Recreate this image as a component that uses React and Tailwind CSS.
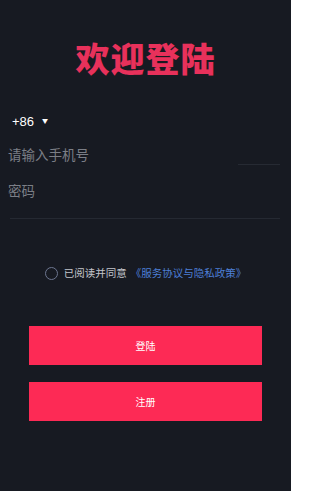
export default function App() {
  const font = { fontFamily: '"Noto Sans CJK SC", "Noto Sans", sans-serif' };
  return (
    <div
      className="w-[291px] h-[491px] bg-[#171a22] flex flex-col overflow-hidden"
      style={font}
    >
      <div className="pt-[36px] flex justify-center">
        <h1 className="text-[34px] leading-[44px] font-black text-[#e8315b] tracking-[1px]">
          欢迎登陆
        </h1>
      </div>

      <div className="mt-[31px] pl-[12px] flex items-center h-[20px]">
        <span className="text-[13px] text-white leading-none" style={{ fontFamily: '"Liberation Sans", sans-serif' }}>+86</span>
        <span className="ml-[8px] text-[6px] text-white leading-none">▼</span>
      </div>

      <div className="mt-[10px] flex items-end h-[20px] pl-[8px] pr-[11px]">
        <span className="text-[13.5px] text-[#7b7e86] leading-none flex-1">请输入手机号</span>
        <div className="w-[42px] h-px bg-[#262a33] mb-[-4px]"></div>
      </div>

      <div className="mt-[20px] pl-[8px] h-[20px] flex items-center">
        <span className="text-[13.5px] text-[#7b7e86] leading-none">密码</span>
      </div>

      <div className="mt-[17px] mx-[10px] w-[270px] h-px bg-[#252932]"></div>

      <div className="mt-[48px] flex items-center justify-center">
        <div className="w-[13px] h-[13px] rounded-full border border-[#6d7690]"></div>
        <span className="ml-[6px] text-[10.5px] text-[#c4c6cc] leading-none">已阅读并同意</span>
        <span className="ml-[4px] text-[10.5px] text-[#4d7fd6] leading-none">《服务协议与隐私政策》</span>
      </div>

      <div className="mt-[46px] flex flex-col items-center gap-[17px]">
        <button className="w-[233px] h-[39px] bg-[#fd2a55] text-white text-[10px] flex items-center justify-center">
          登陆
        </button>
        <button className="w-[233px] h-[39px] bg-[#fd2a55] text-white text-[10px] flex items-center justify-center">
          注册
        </button>
      </div>
    </div>
  );
}
